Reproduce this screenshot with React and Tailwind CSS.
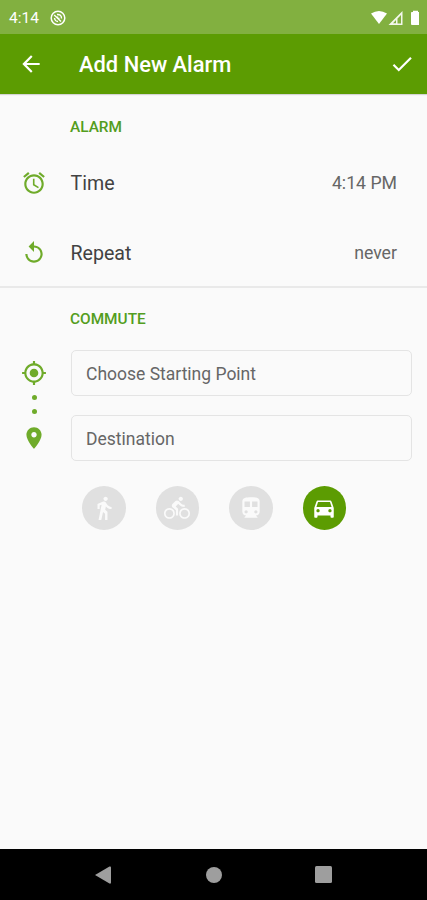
const PATHS = {
  back: 'M20 11H7.83l5.59-5.59L12 4l-8 8 8 8 1.41-1.41L7.83 13H20v-2z',
  check: 'M9 16.17L4.83 12l-1.42 1.41L9 19 21 7l-1.41-1.41z',
  alarm:
    'M22 5.72l-4.6-3.86-1.29 1.53 4.6 3.86L22 5.72zM7.88 3.39L6.6 1.86 2 5.71l1.29 1.53 4.59-3.85zM12.5 8H11v6l4.75 2.85.75-1.23-4-2.37V8zM12 4c-4.97 0-9 4.03-9 9s4.02 9 9 9c4.97 0 9-4.03 9-9s-4.03-9-9-9zm0 16c-3.87 0-7-3.13-7-7s3.13-7 7-7 7 3.13 7 7-3.13 7-7 7z',
  replay:
    'M12 5V1L7 6l5 5V7c3.31 0 6 2.69 6 6s-2.69 6-6 6-6-2.69-6-6H4c0 4.42 3.58 8 8 8s8-3.58 8-8-3.58-8-8-8z',
  location:
    'M12 8c-2.21 0-4 1.79-4 4s1.79 4 4 4 4-1.79 4-4-1.79-4-4-4zm8.94 3c-.46-4.17-3.77-7.48-7.94-7.94V1h-2v2.06C6.83 3.52 3.52 6.83 3.06 11H1v2h2.06c.46 4.17 3.77 7.48 7.94 7.94V23h2v-2.06c4.17-.46 7.48-3.77 7.94-7.94H23v-2h-2.06zM12 19c-3.87 0-7-3.13-7-7s3.13-7 7-7 7 3.13 7 7-3.13 7-7 7z',
  place:
    'M12 2C8.13 2 5 5.13 5 9c0 5.25 7 13 7 13s7-7.75 7-13c0-3.87-3.13-7-7-7zm0 9.5c-1.38 0-2.5-1.12-2.5-2.5s1.12-2.5 2.5-2.5 2.5 1.12 2.5 2.5-1.12 2.5-2.5 2.5z',
  walk:
    'M13.5 5.5c1.1 0 2-.9 2-2s-.9-2-2-2-2 .9-2 2 .9 2 2 2zM9.8 8.9L7 23h2.5l1.6-7.200 1.900 1.500V23h2.200v-7.5l-2.1-2 .6-3C14.8 12 16.8 13 19 13v-2c-1.9 0-3.5-1-4.3-2.4l-1-1.6c-.4-.6-1-1-1.7-1-.3 0-.5.1-.8.1L6 8.3V13h2V9.6l1.8-.7',
  bike:
    'M15.5 5.5c1.1 0 2-.9 2-2s-.9-2-2-2-2 .9-2 2 .9 2 2 2zM5 12c-2.8 0-5 2.2-5 5s2.2 5 5 5 5-2.2 5-5-2.2-5-5-5zm0 8.500c-1.900 0-3.500-1.600-3.500-3.500s1.600-3.500 3.500-3.500 3.500 1.600 3.500 3.500-1.600 3.500-3.500 3.500zm5.800-10l2.400-2.400.8.8c1.300 1.300 3 2.100 5.100 2.100V9c-1.500 0-2.700-.6-3.600-1.500l-1.900-1.900c-.5-.4-1-.6-1.600-.6s-1.100.2-1.400.6L7.800 8.400c-.4.4-.6.9-.6 1.400 0 .6.2 1.100.6 1.400L11 14v5h2v-6.200l-2.200-2.300zM19 12c-2.800 0-5 2.200-5 5s2.200 5 5 5 5-2.200 5-5-2.200-5-5-5zm0 8.500c-1.900 0-3.500-1.600-3.500-3.500s1.600-3.500 3.500-3.500 3.500 1.600 3.500 3.500-1.600 3.500-3.500 3.500z',
  transit:
    'M12 2c-4.420 0-8 .5-8 4v9.500C4 17.430 5.570 19 7.500 19L6 20.500v.5h12v-.5L16.500 19c1.930 0 3.500-1.570 3.500-3.500V6c0-3.500-3.580-4-8-4zM7.500 17c-.83 0-1.500-.67-1.500-1.500S6.670 14 7.500 14s1.500.67 1.500 1.500S8.330 17 7.500 17zm3.500-6H6V6h5v5zm5.500 6c-.83 0-1.500-.67-1.500-1.500s.67-1.500 1.500-1.500 1.500.67 1.500 1.500-.67 1.500-1.500 1.500zm1.500-6h-5V6h5v5z',
  car:
    'M18.92 6.01C18.72 5.42 18.16 5 17.5 5h-11c-.66 0-1.21.42-1.42 1.01L3 12v8c0 .55.45 1 1 1h1c.55 0 1-.45 1-1v-1h12v1c0 .55.45 1 1 1h1c.55 0 1-.45 1-1v-8l-2.08-5.99zM6.500 16c-.83 0-1.500-.67-1.500-1.500S5.670 13 6.500 13s1.500.67 1.500 1.500S7.330 16 6.500 16zm11 0c-.83 0-1.500-.67-1.500-1.500s.67-1.500 1.500-1.500 1.500.67 1.500 1.500-.67 1.500-1.500 1.500zM5 11l1.500-4.500h11L19 11H5z',
};

function Icon({ name, className = '' }) {
  return (
    <svg viewBox="0 0 24 24" fill="currentColor" className={`size-[26px] shrink-0 ${className}`}>
      <path d={PATHS[name]} />
    </svg>
  );
}

function StatusBar() {
  return (
    <div className="flex h-[34px] items-center bg-[#82b040] pt-px pr-2 pl-[9px] text-white">
      <span className="w-[41px] pt-[3px] text-[15.5px] leading-none">4:14</span>
      <svg viewBox="0 0 16 16" className="size-4" fill="none" stroke="currentColor">
        <circle cx="8" cy="8" r="6.8" strokeWidth="1.5" />
        <path
          d="M4.200 5L11 11.500M7 4.500Q11.500 4.200 11.500 8.500M4.500 8Q5 11.500 8 11.500M7.500 8.500V6.500M7.500 8.500H9.500"
          strokeWidth="1.400"
        />
      </svg>
      <div className="ml-auto flex items-center">
        <svg viewBox="0 0 48 16" className="h-4 w-12" fill="currentColor">
          <path d="M0 3.500Q8 -1.500 16 3.500L8 14z" />
          <path
            fillRule="evenodd"
            d="M31.500 1v14H17.500zM30 5L26.500 8.500V13.500H30zM25 10L22 13.200H25z"
            opacity=".9"
          />
          <path d="M40 2.500Q40 2 41 2h1V.8h5V2h1Q49 2 49 3V14Q49 15 48 15H41Q40 15 40 14z" />
        </svg>
      </div>
    </div>
  );
}

function Row({ icon, label, value }) {
  return (
    <div className="flex h-[70px] items-center pr-[30px] pl-[21px]">
      <Icon name={icon} className="text-[#6fab2a]" />
      <span className="ml-[23.5px] pt-px text-[19.6px] text-[#424242]">{label}</span>
      <span className="ml-auto text-[17.7px] text-[#666]">{value}</span>
    </div>
  );
}

function Field({ children }) {
  return (
    <div className="flex h-[46px] items-center rounded-[5px] border-[1.5px] border-[#e4e4e4] pt-[2px] pl-[14.5px] text-[17.5px] text-[#666]">
      {children}
    </div>
  );
}

const MODES = [
  { name: 'walk' },
  { name: 'bike' },
  { name: 'transit' },
  { name: 'car', active: true },
];

export default function App() {
  return (
    <div className="flex h-[900px] w-[427px] flex-col overflow-hidden bg-[#fafafa] font-['Roboto',sans-serif]">
      <StatusBar />
      <header className="flex h-[60px] shrink-0 items-center bg-[#5c9c02] pr-3 pl-[18px] text-white shadow-[0_1px_1px_rgba(0,0,0,0.15)]">
        <Icon name="back" />
        <h1 className="ml-[35px] pt-[2px] text-[21.9px] font-medium">Add New Alarm</h1>
        <Icon name="check" className="ml-auto" />
      </header>

      <section className="h-[194px] shrink-0 border-b-2 border-[#e9e9e9]">
        <h2 className="flex h-[54px] items-end pb-[9px] pl-[70px] text-[15.4px] font-medium text-[#539d20]">
          ALARM
        </h2>
        <Row icon="alarm" label="Time" value="4:14 PM" />
        <Row icon="replay" label="Repeat" value="never" />
      </section>

      <section className="grow">
        <h2 className="flex h-[62px] items-center pt-[2px] pl-[70px] text-[15.4px] font-medium text-[#539d20]">
          COMMUTE
        </h2>
        <div className="flex pr-[15px] pl-[21px]">
          <div className="flex w-[26px] flex-col items-center pt-[10px] text-[#6fab2a]">
            <Icon name="location" />
            <span className="mt-[9px] size-[5px] rounded-full bg-current" />
            <span className="mt-[9px] size-[5px] rounded-full bg-current" />
            <Icon name="place" className="mt-[11px]" />
          </div>
          <div className="ml-[23.5px] flex grow flex-col gap-[19px]">
            <Field>Choose Starting Point</Field>
            <Field>Destination</Field>
          </div>
        </div>
        <div className="mt-[25px] flex gap-[30px] pl-[82px]">
          {MODES.map(({ name, active }) => (
            <div
              key={name}
              className={`flex size-[43.5px] items-center justify-center rounded-full ${
                active ? 'bg-[#5c9c02] text-white' : 'bg-[#e0e0e0] text-[#fafafa]'
              }`}
            >
              <Icon name={name} />
            </div>
          ))}
        </div>
      </section>

      <nav className="flex h-[51px] shrink-0 items-center bg-black pl-[94px] text-[#9e9e9e]">
        <svg viewBox="0 0 17 18" className="h-[18px] w-[17px]" fill="currentColor">
          <path d="M1 9L15.500 .5Q17 0 17 1.500V16.500Q17 18 15.500 17.500z" />
        </svg>
        <span className="ml-[95px] size-4 rounded-full bg-current" />
        <span className="ml-[93px] size-[17px] rounded-[1.5px] bg-current" />
      </nav>
    </div>
  );
}
